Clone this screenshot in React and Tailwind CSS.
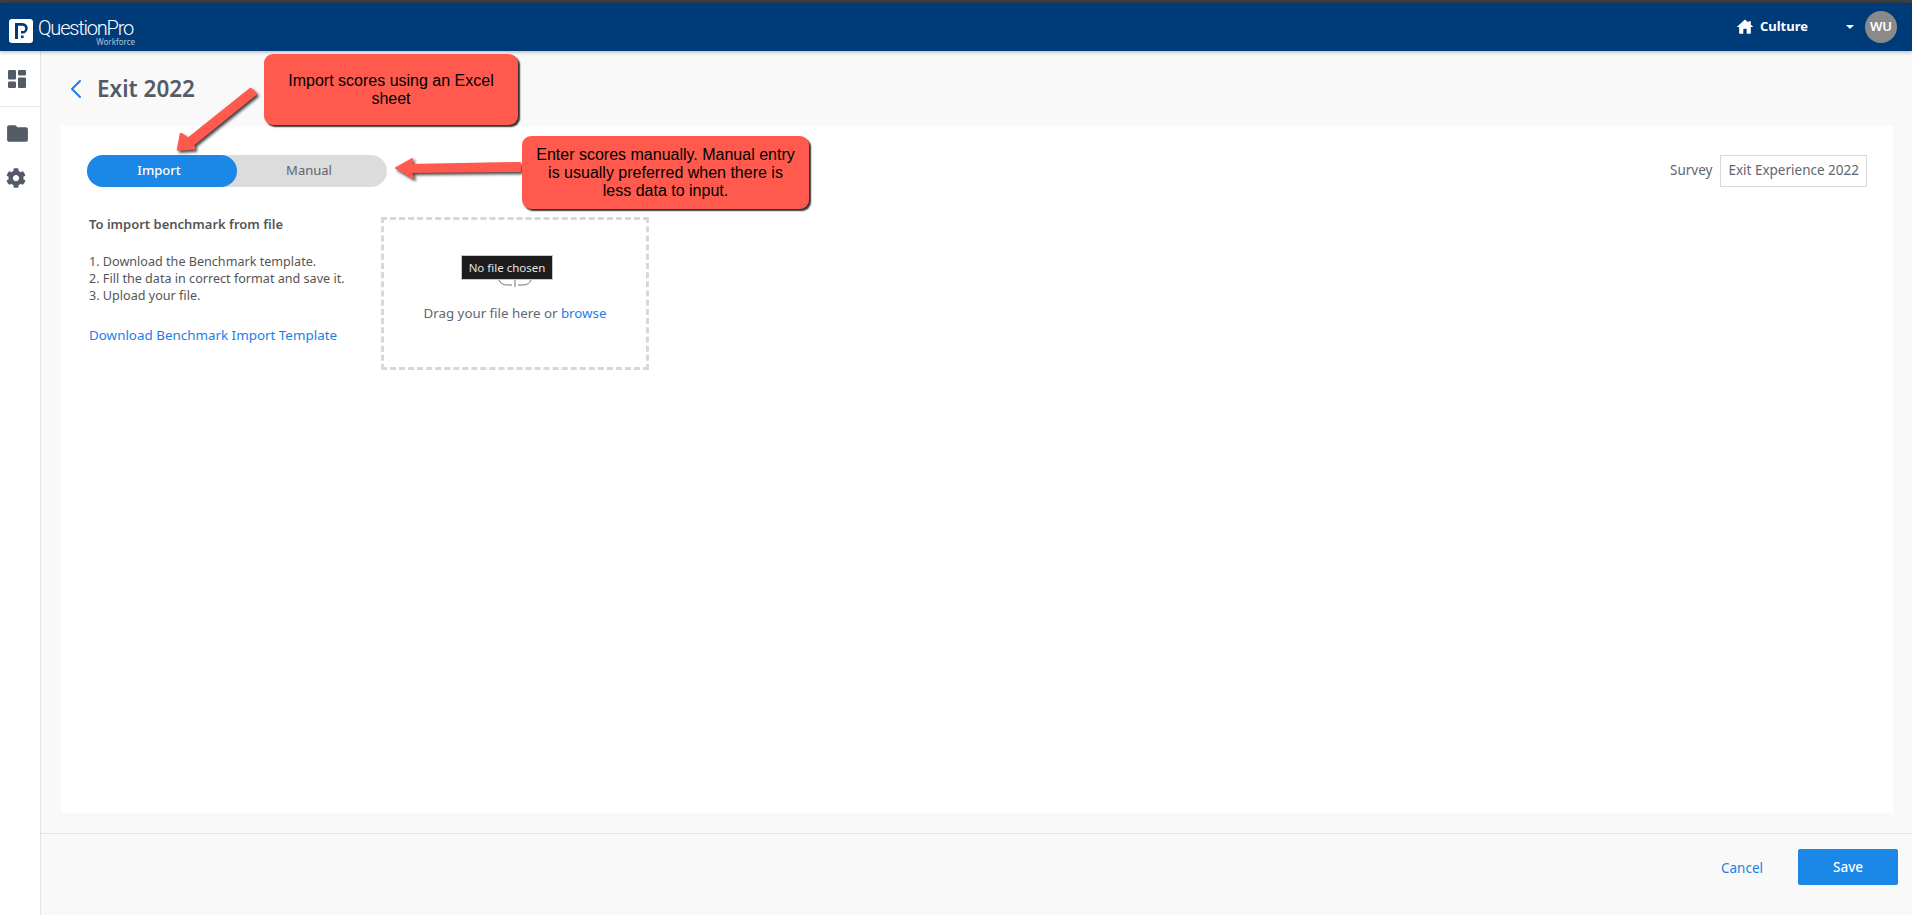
import React from 'react';
import { FaCog } from 'react-icons/fa';
import { MdFolder } from 'react-icons/md';

const sans = 'font-["Noto_Sans",sans-serif]';
const arial = 'font-["Liberation_Sans",Arial,sans-serif]';

function Logo() {
  return (
    <div className="flex items-center pl-[9px] pt-2">
      <div className="w-6 h-6 bg-white rounded-[3px] flex items-center justify-center">
        <svg width="16" height="18" viewBox="0 0 16 18">
          <path d="M2 1h7.5a5 5 0 0 1 0 10.5H8V9h1.5a2.5 2.5 0 0 0 0-5.2H5V17H2z" fill="#003b79" />
          <rect x="8" y="13.5" width="2.6" height="2.6" fill="#003b79" />
        </svg>
      </div>
      <div className="ml-[5px] relative w-[97px] h-6 text-white">
        <div className="font-['Roboto',sans-serif] font-light text-[20px] leading-[18px] tracking-[-1.2px] whitespace-nowrap">QuestionPro</div>
        <div className={`absolute right-0 top-[18px] text-[8px] leading-[9px] text-white/70 ${sans}`}>Workforce</div>
      </div>
    </div>
  );
}

function Header() {
  return (
    <header className="h-[48px] bg-[#003b79] flex items-center justify-between shadow-[0_1px_4px_rgba(0,0,0,0.3)] relative z-10">
      <Logo />
      <div className="flex items-center pr-[15px] text-white">
        <svg width="20" height="20" viewBox="0 0 24 24" fill="currentColor">
          <path d="M10 20v-6h4v6h5v-8h3l-3-2.700V5h-3v1.600L12 3 2 12h3v8z" />
        </svg>
        <span className={`ml-[5px] text-[13px] font-bold ${sans}`}>Culture</span>
        <span className="ml-[38px] w-0 h-0 border-x-[4px] border-x-transparent border-t-[4px] border-t-white" />
        <div className={`ml-[11px] w-8 h-8 rounded-full bg-[#8a8a8a] flex items-center justify-center text-[13px] font-semibold ${sans}`}>WU</div>
      </div>
    </header>
  );
}

function Sidebar() {
  return (
    <aside className="w-[41px] shrink-0 bg-white border-r border-[#e3e3e3] text-[#535b66]">
      <div className="h-[56px] border-b border-[#e8e8e8] flex items-center justify-center pr-[7px]">
        <svg width="18" height="18" viewBox="0 0 18 18" fill="currentColor">
          <rect x="0" y="0" width="8" height="9.500" rx="1.200" />
          <rect x="0" y="11.500" width="8" height="6.500" rx="1.200" />
          <rect x="10" y="0" width="8" height="5.500" rx="1.200" />
          <rect x="10" y="7.500" width="8" height="10.500" rx="1.200" />
        </svg>
      </div>
      <div className="h-[52px] flex items-center justify-center pr-[6px]">
        <MdFolder className="w-[25px] h-[25px]" />
      </div>
      <div className="h-[28px] flex items-center justify-center pr-[8px] mt-[5px]">
        <FaCog className="w-[20px] h-[20px]" />
      </div>
    </aside>
  );
}

function Toggle() {
  return (
    <div className="w-[300px] h-8 rounded-full bg-[#dcdcdc] flex text-[13px]">
      <div className="w-[150px] rounded-full bg-[#1b87e6] text-white flex items-center justify-center font-medium pr-[6px]">Import</div>
      <div className="w-[150px] text-[#5f6670] flex items-center justify-center pr-[6px]">Manual</div>
    </div>
  );
}

function Instructions() {
  return (
    <div className="w-[294px] pl-[2px] text-[12.600px] text-[#555]">
      <div className="-mt-[2px] text-[13px] font-semibold leading-[18px]">To import benchmark from file</div>
      <div className="mt-[20px] leading-[17px]">
        <div>1. Download the Benchmark template.</div>
        <div>2. Fill the data in correct format and save it.</div>
        <div>3. Upload your file.</div>
      </div>
      <div className="mt-[22px] text-[13.400px] leading-[18px] text-[#1b7ee6]">Download Benchmark Import Template</div>
    </div>
  );
}

function DropZone() {
  return (
    <div className="relative w-[268px] h-[153px] border-[3px] border-dashed border-[#d8d8d8] flex flex-col items-center">
      <svg className="mt-[41px]" width="40" height="26" viewBox="0 0 40 26" fill="none" stroke="#6b7280" strokeWidth="1">
        <path d="M4 19c1 3 4 5 8 5h5M23 24h5c4 0 7-2 8-5M20 18v8" />
      </svg>
      <div className="mt-[16px] text-[13.300px] leading-5 text-[#5f6670]">
        Drag your file here or <span className="text-[#1b7ee6]">browse</span>
      </div>
      <div className="absolute left-[77px] top-[35px] h-[25px] w-[92px] bg-[#1d1d1d] border border-[#c8c8c8] text-[#e4e4e4] text-[11.500px] flex items-center justify-center whitespace-nowrap">
        No file chosen
      </div>
    </div>
  );
}

function Callouts() {
  return (
    <>
      <svg className="absolute left-0 top-0 z-20 pointer-events-none" width="540" height="220" viewBox="0 0 540 220">
        <g fill="#ff5a4d" stroke="#ff5a4d" strokeLinejoin="round" style={{ filter: 'drop-shadow(2px 2px 1.500px rgba(0,0,0,0.75))' }}>
          <path d="M250.500 89L188 139l-7-5-3 15.500 16-1-1-4L255.500 94z" strokeWidth="2.500" />
          <path d="M520 163L411 165l1-6-16 9 17 10-2-6 109-1z" strokeWidth="2" />
        </g>
      </svg>
      <div className={`absolute left-[264px] top-[54px] z-30 w-[254px] h-[71px] bg-[#ff5a4d] rounded-[9px] shadow-[2px_2px_1.500px_rgba(0,0,0,0.8)] flex items-center justify-center text-center text-black text-[16px] leading-[18px] px-4 ${arial}`}>
        Import scores using an Excel sheet
      </div>
      <div className={`absolute left-[522px] top-[136px] z-30 w-[287px] h-[73px] bg-[#ff5a4d] rounded-[9px] shadow-[2px_2px_1.500px_rgba(0,0,0,0.8)] flex items-center justify-center text-center text-black text-[16px] leading-[18px] px-[14px] ${arial}`}>
        Enter scores manually. Manual entry is usually preferred when there is less data to input.
      </div>
    </>
  );
}

export default function App() {
  return (
    <div className={`relative h-[915px] w-full overflow-hidden bg-[#f9f9f9] ${sans}`}>
      <div className="h-[3px] bg-[#3a3f44]" />
      <Header />
      <div className="flex h-[864px]">
        <Sidebar />
        <main className="flex-1 flex flex-col">
          <div className="h-[75px] pl-[29px] pt-[1px] flex items-center">
            <svg width="12" height="20" viewBox="0 0 12 20" fill="none" stroke="#1b7ee6" strokeWidth="2" strokeLinecap="round" strokeLinejoin="round">
              <path d="M10 2L2 10l8 8" />
            </svg>
            <h1 className="ml-[15px] text-[22.500px] font-semibold text-[#545b66] leading-none">Exit 2022</h1>
          </div>
          <section className="ml-5 mr-[19px] h-[687px] bg-white px-[26px] pt-[29px]">
            <div className="flex items-center justify-between">
              <Toggle />
              <div className="flex items-center">
                <span className="text-[13.500px] text-[#5f6670] pb-[2px]">Survey</span>
                <div className="ml-[8px] h-8 px-[7px] pb-[2px] border border-[#d8d8d8] flex items-center text-[13.500px] text-[#5f6670] whitespace-nowrap">Exit Experience 2022</div>
              </div>
            </div>
            <div className="flex mt-[30px]">
              <Instructions />
              <DropZone />
            </div>
          </section>
          <div className="mt-5 flex-1 border-t border-[#e3e3e3] flex items-start justify-end pt-[15px] pr-[14px]">
            <span className="mt-[9px] text-[13.500px] text-[#1b7ee6]">Cancel</span>
            <button className="ml-[35px] w-[100px] h-[36px] bg-[#1b87e6] rounded-[2px] text-white text-[13.500px] font-medium">Save</button>
          </div>
        </main>
      </div>
      <Callouts />
    </div>
  );
}
